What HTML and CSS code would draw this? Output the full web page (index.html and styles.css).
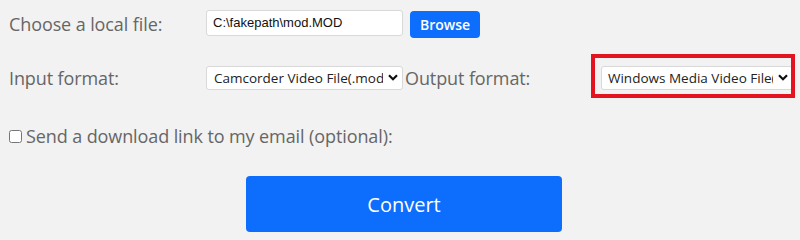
FILE: index.html
```html
<!DOCTYPE html>
<html>
<head>
<meta charset="utf-8">
<link rel="stylesheet" href="styles.css">
</head>
<body>
<form class="form">
  <div class="row row-file">
    <label class="label">Choose a local file:</label>
    <div class="file-box">C:\fakepath\mod.MOD</div>
    <button type="button" class="browse">Browse</button>
  </div>
  <div class="row row-format">
    <label class="label">Input format:</label>
    <select class="select select-in"><option>Camcorder Video File(.mod)</option></select>
    <label class="label label-out">Output format:</label>
    <div class="out-wrap">
      <select class="select select-out"><option>Windows Media Video File(.wmv)</option></select>
      <div class="highlight"></div>
    </div>
  </div>
  <div class="row row-check">
    <input type="checkbox" class="check" id="mail">
    <label class="check-label" for="mail">Send a download link to my email (optional):</label>
  </div>
  <div class="row row-submit">
    <button type="button" class="convert">Convert</button>
  </div>
</form>
</body>
</html>
```

FILE: styles.css
```css
html, body {
  margin: 0;
  padding: 0;
  background: #f2f2f2;
}
body {
  width: 800px;
  height: 239px;
  overflow: hidden;
  font-family: "Open Sans", "Noto Sans", sans-serif;
  color: #666;
}
.form {
  padding-left: 9px;
}
.row {
  display: flex;
  align-items: center;
}
.label {
  font-size: 18px;
  line-height: 24px;
  color: #666;
  letter-spacing: -0.1px;
}
.row-file {
  margin-top: 10px;
  height: 28px;
}
.row-file .label {
  width: 197px;
}
.file-box {
  box-sizing: border-box;
  width: 197px;
  height: 26px;
  margin-top: -3px;
  background: #fff;
  border: 1px solid #d9d9d9;
  border-radius: 3px;
  font-family: "Liberation Sans", Arial, sans-serif;
  font-size: 13px;
  line-height: 24px;
  color: #111;
  padding-left: 6px;
}
.browse {
  box-sizing: border-box;
  margin-left: 7px;
  width: 70px;
  height: 27px;
  border: none;
  border-radius: 4px;
  background: #0d6efd;
  color: #fff;
  font-family: "Open Sans", sans-serif;
  font-weight: 600;
  font-size: 14px;
  padding: 0;
}
.row-format {
  margin-top: 27px;
  height: 25px;
}
.row-format > .label:first-child {
  width: 197px;
}
.select {
  box-sizing: border-box;
  appearance: none;
  -webkit-appearance: none;
  height: 24px;
  background-color: #fff;
  border: 1px solid #d9d9d9;
  border-radius: 3px;
  font-family: "Open Sans", sans-serif;
  font-size: 13.5px;
  color: #222;
  padding: 0 19px 0 7px;
  background-image: url("data:image/svg+xml;utf8,<svg xmlns='http://www.w3.org/2000/svg' width='10' height='7' viewBox='0 0 10 7'><path d='M1 1.2 L5 5.2 L9 1.2' fill='none' stroke='%23111' stroke-width='2.2'/></svg>");
  background-repeat: no-repeat;
  background-position: right 4px center;
  background-size: 10px 7px;
}
.select-in {
  width: 197px;
}
.label-out {
  margin-left: 2px;
  width: 196px;
}
.out-wrap {
  position: relative;
  height: 24px;
}
.select-out {
  width: 192px;
  padding-left: 6px;
}
.highlight {
  position: absolute;
  left: -10px;
  top: -12px;
  width: 204px;
  height: 44px;
  box-sizing: border-box;
  border: 4px solid #e3141f;
}
.row-check {
  margin-top: 33px;
  height: 26px;
}
.check {
  margin: 0;
  width: 13px;
  height: 13px;
}
.check-label {
  margin-left: 4px;
  font-size: 18px;
  line-height: 24px;
  color: #666;
  letter-spacing: -0.1px;
}
.row-submit {
  margin-top: 27px;
}
.convert {
  margin-left: 237px;
  width: 316px;
  height: 56px;
  border: none;
  border-radius: 4px;
  background: #0d6efd;
  color: #fff;
  font-family: "Open Sans", sans-serif;
  font-size: 20px;
  padding: 0;
}
```
